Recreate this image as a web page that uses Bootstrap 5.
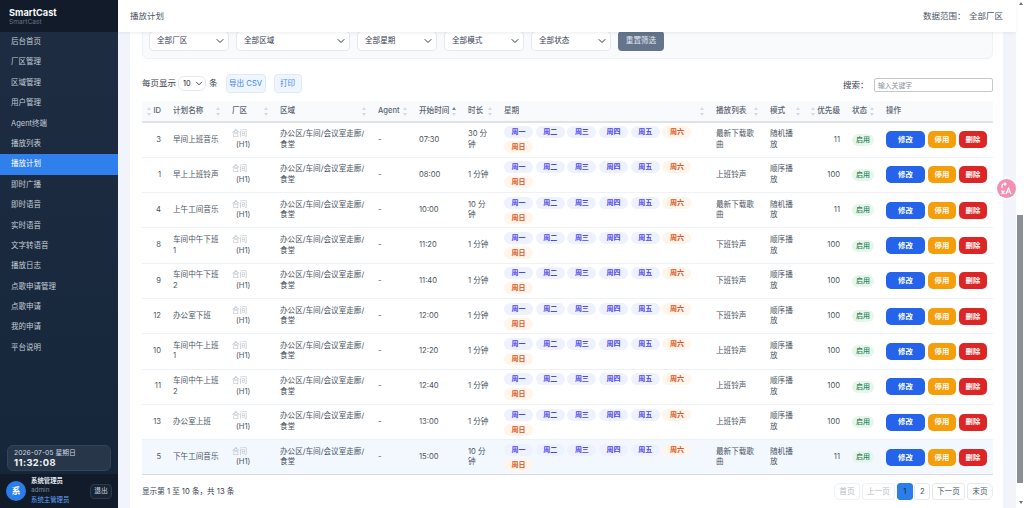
<!DOCTYPE html>
<html lang="zh-CN">
<head>
    <meta charset="UTF-8">
    <meta name="viewport" content="width=device-width, initial-scale=1.0">
    <title>播放计划 - SmartCast</title>
    <link href="https://cdn.jsdelivr.net/npm/bootstrap@5.3.3/dist/css/bootstrap.min.css" rel="stylesheet">
    <style>
        html, body { height: 100%; overflow: hidden; }
        body {
            background-color: #f1f5fb;
            color: #374151;
            font-family: Inter, "Noto Sans CJK SC", sans-serif;
            font-size: 7.6px;
        }
        .app-shell { height: 100vh; }

        /* Sidebar */
        .side-wrap {
            width: 118px;
            background: linear-gradient(180deg, #1e2d42 0%, #16263a 100%);
        }
        .side-head { height: 32px; background-color: #111b29; padding: 7px 9px 0; line-height: 1.2; }
        .side-brand { color: #f8fafc; font-size: 9.2px; font-weight: 700; }
        .side-sub { color: #64748b; font-size: 6.6px; margin-top: 1px; }
        .side-nav { padding-top: 0; }
        .side-link {
            color: #c3ccd8;
            font-size: 7.5px;
            height: 20.4px;
            line-height: 20.4px;
            padding: 0 0 0 11px;
        }
        .side-link.current { background-color: #2f80ed; color: #fff; }
        .clock-box {
            margin: 0 7px 3px;
            height: 26px;
            padding: 3px 6px;
            background-color: #283649;
            border: 1px solid #344356;
            border-radius: 6px;
            line-height: 1.25;
        }
        .clock-date { color: #cbd5e1; font-size: 6.8px; }
        .clock-time { color: #f1f5f9; font-size: 9.4px; font-weight: 700; letter-spacing: .4px; }
        .user-box { height: 34px; background-color: #111b29; padding: 0 6px; gap: 5px; }
        .user-pic {
            width: 20px;
            height: 20px;
            background-color: #2b7de9;
            color: #fff;
            font-size: 9px;
            font-weight: 700;
        }
        .user-info { line-height: 9.6px; font-size: 6.4px; }
        .user-name { color: #e2e8f0; font-weight: 700; }
        .user-id { color: #7b8aa0; }
        .user-role { color: #60a5fa; }
        .quit-btn {
            width: 22px;
            height: 15px;
            padding: 0;
            margin-left: auto;
            color: #cbd5e1;
            font-size: 6.8px;
            background-color: #182333;
            border: 1px solid #2c3a4d;
            border-radius: 4px;
        }

        /* Top bar */
        .top-strip {
            height: 32px;
            z-index: 10;
            padding: 0 13px 0 12px;
            font-size: 8.5px;
            color: #4b5563;
            box-shadow: 0 1px 3px rgba(15, 23, 42, .08);
        }
        .range-label { margin-right: 3.5px; }

        /* Main card, already scrolled so the filter row sits under the top bar */
        .main-col { min-width: 0; }
        .scroll-area { min-height: 0; overflow: hidden; }
        .page-card {
            height: calc(100% + 8px);
            margin: -8px 13px 0 12px;
            padding: 0 10px 12px 12px;
        }
        .filter-box {
            height: 35px;
            padding: 6px 6px;
            gap: 7px;
            background-color: #f8fafc;
            border: 1px solid #eef2f6;
            border-radius: 6px;
        }
        .pick {
            height: 20px;
            padding: 0 0 0 7px;
            font-size: 7.6px;
            color: #374151;
            border-color: #e5e9ef;
            border-radius: 4px;
            background-size: 10px 8px;
            background-position: right 3px center;
        }
        .pick-80 { width: 80px; }
        .pick-114 { width: 114px; }
        .reset-btn {
            height: 20px;
            width: 46px;
            padding: 0;
            font-size: 7.6px;
            color: #e2e8f0;
            background-color: #64748b;
            border: 0;
            border-radius: 4px;
        }

        .tools-row { height: 42px; font-size: 8.5px; padding-top: 15px; }
        .page-size {
            width: 28px;
            height: 15px;
            margin: 0 3px 0 2px;
            padding: 0 0 0 4px;
            font-size: 7.4px;
            border-color: #e5e9ef;
            background-size: 8px 7px;
            background-position: right 2px center;
        }
        .soft-btn {
            width: 40px;
            height: 19px;
            padding: 0;
            font-size: 7.6px;
            color: #3b82f6;
            background-color: #eff6ff;
            border: 1px solid #dbeafe;
            border-radius: 4px;
        }
        .print-btn { width: 28px; margin-left: 8px; }
        .find-input {
            width: 119px;
            height: 14px;
            margin-left: 5.5px;
            padding: 0 3px;
            font-size: 6.8px;
            border: 1px solid #c4c8ce;
            border-radius: 2px;
        }
        .find-input::placeholder { color: #8b929c; }

        /* Table */
        .plan-table { table-layout: fixed; width: 851px; margin: 0; font-size: 7.6px; line-height: 10.6px; }
        .plan-table th {
            height: 21px;
            padding: 1px 6px 0;
            position: relative;
            color: #5b6472;
            font-weight: 500;
            vertical-align: middle;
            background-color: #f8fafc;
            border-bottom: 2px solid #dfe3e8;
            white-space: nowrap;
        }
        .plan-table td {
            height: 35.3px;
            padding: 0 6px;
            color: #4b5563;
            vertical-align: middle;
            border-bottom: 1px solid #eef1f5;
        }
        .plan-table tr:last-child td { background-color: #f3f8ff; border-bottom: 1px solid #d8dce2; }
        .sort-mark {
            position: absolute;
            right: 6px;
            top: 6px;
            width: 4px;
            height: 9px;
        }
        .sort-mark.at-left { right: auto; left: 5px; }
        .sort-mark::before, .sort-mark::after {
            content: '';
            position: absolute;
            left: 0;
            border-left: 2px solid transparent;
            border-right: 2px solid transparent;
        }
        .sort-mark::before { top: 0; border-bottom: 3.5px solid #d5dae1; }
        .sort-mark::after { bottom: 0; border-top: 3.5px solid #d5dae1; }
        .sort-mark.up::before { border-bottom-color: #7b8494; }

        .factory-name { display: block; color: #b9c0c9; filter: blur(.3px); }
        .factory-code { display: block; padding-left: 4px; }
        .day-list { gap: 3px 2.7px; }
        .day-pill {
            width: 29px;
            height: 12px;
            line-height: 12px;
            padding: 0;
            font-size: 7px;
            font-weight: 600;
            color: #4f46e5;
            background-color: #eef2ff;
        }
        .day-pill.weekend { color: #d9541e; background-color: #fff5eb; }
        .state-pill {
            padding: 0 4px;
            height: 12px;
            line-height: 12px;
            font-size: 7px;
            font-weight: 500;
            color: #2f855a;
            background-color: #e6f6ec;
        }
        .act-row { gap: 3px; }
        .act-btn {
            height: 17px;
            width: 28px;
            padding: 0;
            font-size: 7.4px;
            font-weight: 600;
            color: #fff;
            border: 0;
            border-radius: 5px;
        }
        .act-edit { width: 39px; background-color: #2563eb; }
        .act-stop { background-color: #f59e0b; }
        .act-del { background-color: #dc2626; }

        .foot-row { height: 30px; margin-top: 1px; }
        .foot-row .page-link {
            height: 17px;
            line-height: 15px;
            padding: 0 4.5px;
            font-size: 7.6px;
            color: #4b5563;
            background-color: #fff;
            border: 1px solid #e5e9ef;
            border-radius: 3px;
        }
        .foot-row .disabled .page-link { color: #b6bcc5; border-color: #eef1f5; }
        .foot-row .active .page-link { color: #1f2937; background-color: #2b7de9; border-color: #2b7de9; padding: 0 5.5px; }
        .foot-row .page-item { margin-left: 2.5px; }

        /* Window scrollbar */
        .bar-strip { width: 8px; }
        .bar-up, .bar-down {
            width: 0;
            margin-left: 2.5px;
            border-left: 2.5px solid transparent;
            border-right: 2.5px solid transparent;
        }
        .bar-up { margin-top: 2px; border-bottom: 3px solid #6b7280; }
        .bar-thumb { width: 6px; height: 268px; margin: 210px 0 0 1px; background-color: #8a8f96; }
        .bar-down { margin-top: 18px; border-top: 3px solid #6b7280; }

        .float-tool {
            position: fixed;
            left: 997px;
            top: 179px;
            width: 19px;
            height: 19px;
            z-index: 30;
            background-color: #f48fb1;
            box-shadow: 0 0 0 2px rgba(255, 255, 255, .7);
        }
    </style>
</head>
<body>
    <div class="app-shell d-flex">
        <aside class="side-wrap d-flex flex-column flex-shrink-0">
            <div class="side-head">
                <div class="side-brand">SmartCast</div>
                <div class="side-sub">SmartCast</div>
            </div>
            <nav class="nav flex-column side-nav" id="sideNav"></nav>
            <div class="mt-auto">
                <div class="clock-box">
                    <div class="clock-date">2026-07-05 星期日</div>
                    <div class="clock-time">11:32:08</div>
                </div>
                <div class="user-box d-flex align-items-center">
                    <div class="user-pic rounded-circle d-flex align-items-center justify-content-center flex-shrink-0">系</div>
                    <div class="user-info">
                        <div class="user-name">系统管理员</div>
                        <div class="user-id">admin</div>
                        <div class="user-role">系统主管理员</div>
                    </div>
                    <button class="btn quit-btn" type="button">退出</button>
                </div>
            </div>
        </aside>

        <div class="main-col flex-grow-1 d-flex flex-column">
            <header class="top-strip position-relative flex-shrink-0 bg-white d-flex align-items-center justify-content-between">
                <div>播放计划</div>
                <div><span class="range-label">数据范围：</span>全部厂区</div>
            </header>

            <div class="scroll-area flex-grow-1">
                <main class="page-card bg-white">
                    <div class="filter-box d-flex">
                        <select class="form-select pick pick-80"><option>全部厂区</option></select>
                        <select class="form-select pick pick-114"><option>全部区域</option></select>
                        <select class="form-select pick pick-80"><option>全部星期</option></select>
                        <select class="form-select pick pick-80"><option>全部模式</option></select>
                        <select class="form-select pick pick-80"><option>全部状态</option></select>
                        <button class="btn reset-btn" type="button">重置筛选</button>
                    </div>

                    <div class="tools-row d-flex align-items-start justify-content-between">
                        <div class="d-flex align-items-center">
                            <span>每页显示</span>
                            <select class="form-select page-size"><option>10</option></select>
                            <span class="me-2">条</span>
                            <button class="btn soft-btn" type="button">导出 CSV</button>
                            <button class="btn soft-btn print-btn" type="button">打印</button>
                        </div>
                        <div class="d-flex align-items-center pt-1">
                            <span>搜索：</span>
                            <input class="form-control find-input" type="text" placeholder="输入关键字">
                        </div>
                    </div>

                    <table class="table plan-table">
                        <colgroup>
                            <col style="width:25px"><col style="width:59px"><col style="width:48px"><col style="width:98px">
                            <col style="width:41px"><col style="width:49px"><col style="width:36px"><col style="width:212px">
                            <col style="width:54px"><col style="width:42px"><col style="width:40px"><col style="width:34px"><col>
                        </colgroup>
                        <thead>
                            <tr>
                                <th class="text-end"><i class="sort-mark at-left"></i>ID</th>
                                <th>计划名称<i class="sort-mark"></i></th>
                                <th>厂区<i class="sort-mark"></i></th>
                                <th>区域<i class="sort-mark"></i></th>
                                <th>Agent<i class="sort-mark"></i></th>
                                <th>开始时间<i class="sort-mark up"></i></th>
                                <th>时长<i class="sort-mark"></i></th>
                                <th>星期<i class="sort-mark"></i></th>
                                <th>播放列表<i class="sort-mark"></i></th>
                                <th>模式<i class="sort-mark"></i></th>
                                <th class="text-end"><i class="sort-mark at-left"></i>优先级</th>
                                <th>状态<i class="sort-mark"></i></th>
                                <th>操作</th>
                            </tr>
                        </thead>
                        <tbody id="planRows"></tbody>
                    </table>

                    <div class="foot-row d-flex align-items-center justify-content-between">
                        <div>显示第 1 至 10 条，共 13 条</div>
                        <ul class="pagination mb-0">
                            <li class="page-item disabled"><a class="page-link" href="#">首页</a></li>
                            <li class="page-item disabled"><a class="page-link" href="#">上一页</a></li>
                            <li class="page-item active"><a class="page-link" href="#">1</a></li>
                            <li class="page-item"><a class="page-link" href="#">2</a></li>
                            <li class="page-item"><a class="page-link" href="#">下一页</a></li>
                            <li class="page-item"><a class="page-link" href="#">末页</a></li>
                        </ul>
                    </div>
                </main>
            </div>
        </div>

        <div class="bar-strip bg-white flex-shrink-0">
            <div class="bar-up"></div>
            <div class="bar-thumb"></div>
            <div class="bar-down"></div>
        </div>
    </div>

    <div class="float-tool rounded-circle d-flex align-items-center justify-content-center">
        <svg width="13" height="13" viewBox="0 0 13 13" fill="none" stroke="#fff" stroke-width="1.2">
            <path d="M2 6V3.5A1.5 1.5 0 0 1 3.5 2H6M4.5.5 6 2 4.5 3.5"/>
            <path d="M6 12 8.5 6 11 12M7 10h3"/>
            <path d="M1.5 8.5 4.5 12M4.5 8.5 1.5 12"/>
        </svg>
    </div>

    <script src="https://cdn.jsdelivr.net/npm/bootstrap@5.3.3/dist/js/bootstrap.bundle.min.js"></script>
    <script>
        var menu = ["后台首页", "厂区管理", "区域管理", "用户管理", "Agent终端", "播放列表", "播放计划", "即时广播", "即时语音", "实时语音", "文字转语音", "播放日志", "点歌申请管理", "点歌申请", "我的申请", "平台说明"];
        document.getElementById("sideNav").innerHTML = menu.map(function (m) {
            return '<a class="nav-link side-link' + (m === "播放计划" ? " current" : "") + '" href="#">' + m + '</a>';
        }).join("");

        var plans = [
            [3, "早间上班音乐", "07:30", "30 分钟", "最新下载歌曲", "随机播放", 11],
            [1, "早上上班铃声", "08:00", "1 分钟", "上班铃声", "顺序播放", 100],
            [4, "上午工间音乐", "10:00", "10 分钟", "最新下载歌曲", "随机播放", 11],
            [8, "车间中午下班1", "11:20", "1 分钟", "下班铃声", "顺序播放", 100],
            [9, "车间中午下班2", "11:40", "1 分钟", "下班铃声", "顺序播放", 100],
            [12, "办公室下班", "12:00", "1 分钟", "下班铃声", "顺序播放", 100],
            [10, "车间中午上班1", "12:20", "1 分钟", "上班铃声", "顺序播放", 100],
            [11, "车间中午上班2", "12:40", "1 分钟", "上班铃声", "顺序播放", 100],
            [13, "办公室上班", "13:00", "1 分钟", "上班铃声", "顺序播放", 100],
            [5, "下午工间音乐", "15:00", "10 分钟", "最新下载歌曲", "随机播放", 11]
        ];
        var days = ["周一", "周二", "周三", "周四", "周五", "周六", "周日"];
        var dayHtml = days.map(function (d, i) {
            return '<span class="badge rounded-pill day-pill' + (i > 4 ? " weekend" : "") + '">' + d + '</span>';
        }).join("");

        document.getElementById("planRows").innerHTML = plans.map(function (p) {
            return '<tr>' +
                '<td class="text-end">' + p[0] + '</td>' +
                '<td>' + p[1] + '</td>' +
                '<td><span class="factory-name">合间</span><span class="factory-code">(H1)</span></td>' +
                '<td>办公区/车间/会议室走廊/食堂</td>' +
                '<td>-</td>' +
                '<td>' + p[2] + '</td>' +
                '<td>' + p[3] + '</td>' +
                '<td><div class="day-list d-flex flex-wrap">' + dayHtml + '</div></td>' +
                '<td>' + p[4] + '</td>' +
                '<td>' + p[5] + '</td>' +
                '<td class="text-end">' + p[6] + '</td>' +
                '<td><span class="badge rounded-pill state-pill">启用</span></td>' +
                '<td><div class="act-row d-flex">' +
                    '<button class="btn act-btn act-edit" type="button">修改</button>' +
                    '<button class="btn act-btn act-stop" type="button">停用</button>' +
                    '<button class="btn act-btn act-del" type="button">删除</button>' +
                '</div></td>' +
            '</tr>';
        }).join("");
    </script>
</body>
</html>
